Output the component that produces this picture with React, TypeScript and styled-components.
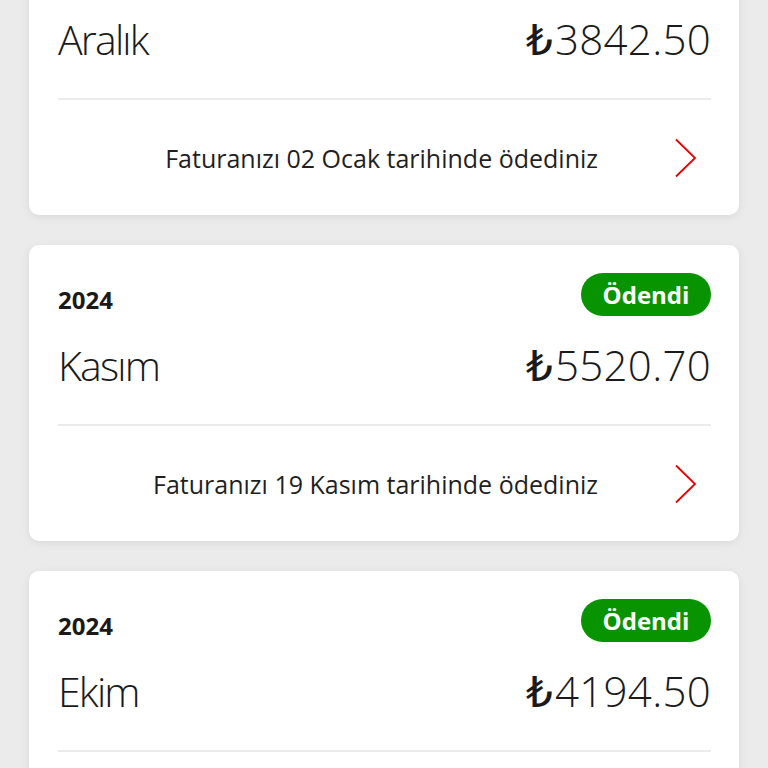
import React from "react";
import styled, { createGlobalStyle } from "styled-components";

type Bill = {
  year: string;
  month: string;
  amount: string;
  note: string;
};

const bills: Bill[] = [
  { year: "2024", month: "Aralık", amount: "3842.50", note: "Faturanızı 02 Ocak tarihinde ödediniz" },
  { year: "2024", month: "Kasım", amount: "5520.70", note: "Faturanızı 19 Kasım tarihinde ödediniz" },
  { year: "2024", month: "Ekim", amount: "4194.50", note: "Faturanızı 21 Ekim tarihinde ödediniz" },
];

const GlobalStyle = createGlobalStyle`
  html, body {
    margin: 0;
    padding: 0;
    background: #ebebeb;
    font-family: "Open Sans", "Noto Sans", sans-serif;
    color: #1a1a1a;
    overflow: hidden;
  }
`;

const Chevron = () => (
  <svg width="24" height="40" viewBox="0 0 24 40" fill="none">
    <path d="M2 1.5 L21 20 L2 38.5" stroke="#e60000" strokeWidth="1.8" strokeLinejoin="miter" />
  </svg>
);

const BillCard = ({ bill }: { bill: Bill }) => (
  <Card>
    <Header>
      <Year>{bill.year}</Year>
      <Badge>Ödendi</Badge>
    </Header>
    <MainRow>
      <Month>{bill.month}</Month>
      <Amount>
        <Lira>₺</Lira>
        {bill.amount}
      </Amount>
    </MainRow>
    <Footer>
      <Note>{bill.note}</Note>
      <Chevron />
    </Footer>
  </Card>
);

const App = () => (
  <>
    <GlobalStyle />
    <List>
      {bills.map((b) => (
        <BillCard key={b.month} bill={b} />
      ))}
    </List>
  </>
);

// list is shown scrolled, first card partly above the fold
const List = styled.div`
  display: flex;
  flex-direction: column;
  gap: 30px;
  padding: 0 29px 0 29px;
  margin-top: -81px;
`;

const Card = styled.div`
  background: #fff;
  border-radius: 10px;
  box-shadow: 0 2px 8px rgba(0, 0, 0, 0.08);
  padding: 28px 28px 0 29px;
  display: flex;
  flex-direction: column;
`;

const Header = styled.div`
  display: flex;
  justify-content: space-between;
  align-items: flex-end;
  height: 43px;
`;

const Year = styled.span`
  font-size: 24px;
  font-weight: 700;
  line-height: 1;
  margin-bottom: 4px;
`;

const Badge = styled.span`
  display: flex;
  align-items: center;
  justify-content: center;
  width: 130px;
  height: 43px;
  border-radius: 22px;
  background: #089400;
  color: #fff;
  font-size: 24px;
  font-weight: 700;
`;

const MainRow = styled.div`
  display: flex;
  justify-content: space-between;
  align-items: baseline;
  margin-top: 25px;
  padding-bottom: 33px;
  border-bottom: 2px solid #ebebeb;
`;

const Month = styled.span`
  font-size: 41px;
  font-weight: 300;
  line-height: 48px;
  letter-spacing: -1.8px;
`;

const Amount = styled.span`
  font-size: 42px;
  font-weight: 300;
  line-height: 48px;
  letter-spacing: 0.3px;
`;

const Lira = styled.span`
  font-family: "DejaVu Sans", sans-serif;
  font-weight: 400;
  margin-right: 2px;
`;

const Footer = styled.div`
  height: 115px;
  display: flex;
  justify-content: flex-end;
  align-items: center;
  gap: 76px;
  padding-right: 13px;
`;

const Note = styled.span`
  font-size: 25px;
  font-weight: 400;
  color: #1f1f1f;
`;

export default App;
